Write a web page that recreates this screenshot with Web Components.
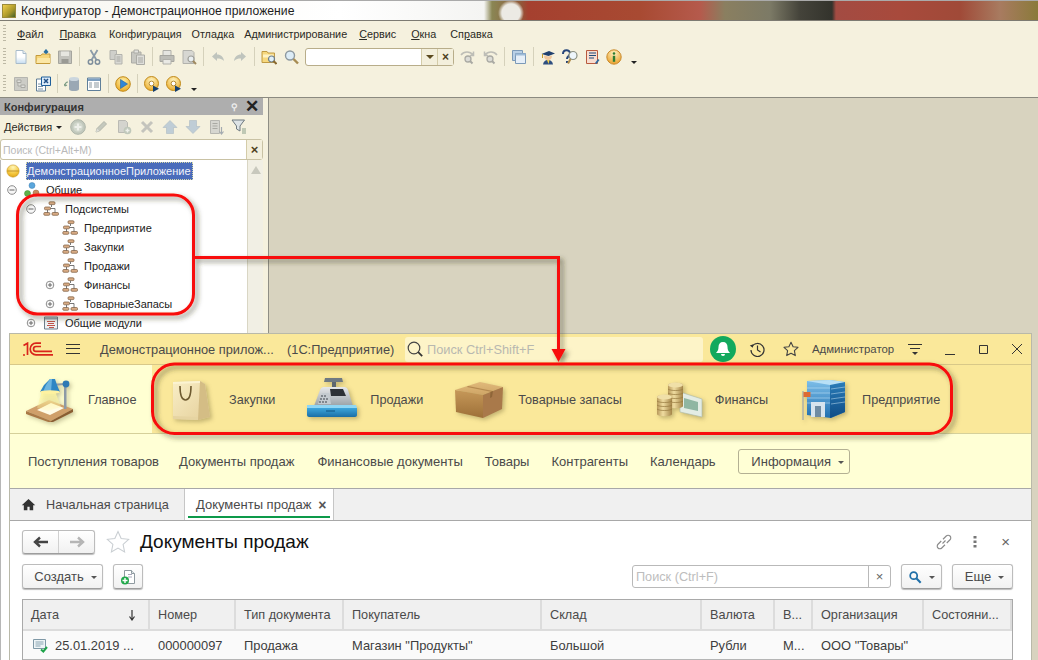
<!DOCTYPE html>
<html lang="ru">
<head>
<meta charset="utf-8">
<title>Конфигуратор</title>
<style>
  html, body { margin: 0; padding: 0; background: #fff; }
  body { position: relative; width: 1038px; height: 660px; overflow: hidden; font-family: "Liberation Sans", Arial, sans-serif; }
</style>
</head>
<body>
<cfg-designer></cfg-designer>
<ent-window></ent-window>
<red-callout></red-callout>

<script>
// Icon library, all drawn by hand on a 16x16 box
const ICONS = {
  doc: `<defs><linearGradient id="g" x2="0" y2="1"><stop offset=".5" stop-color="#fff"/><stop offset="1" stop-color="#c5dcf0"/></linearGradient></defs><path d="M3 1.5h7l3 3v10H3z" fill="url(#g)" stroke="#a9bccb"/><path d="M10 1.5v3h3" fill="#e8eef3" stroke="#a9bccb"/>`,
  open: `<path d="M1 6.5h5l1-1.5h8v9.500H1z" fill="#f7d67a" stroke="#c49a3a"/><path d="M1.500 14l1-5h12.500v5z" fill="#fbe7a6"/><path d="M11 5V1.500M9 3.500l2-2.500 2 2.500" fill="none" stroke="#2a6f9f" stroke-width="1.4"/>`,
  save: `<path d="M1.500 2h13v12.500h-13z" fill="#c2c2bc" stroke="#a5a59e"/><path d="M4 2.500h8v4.500H4z" fill="#e6e6e0"/><path d="M4.500 10h7v4h-7z" fill="#9a9a94"/>`,
  cut: `<path d="M4.500 1l6 10M11.500 1l-6 10" stroke="#8a9aa8" stroke-width="1.8" fill="none"/><circle cx="4.500" cy="13" r="2.200" fill="none" stroke="#7e8e9c" stroke-width="1.5"/><circle cx="11.500" cy="13" r="2.200" fill="none" stroke="#7e8e9c" stroke-width="1.5"/>`,
  copy: `<path d="M2 1.500h6.500v9H2z" fill="#cfcfca" stroke="#b3b3ad"/><path d="M7 5.500h7v9.500H7z" fill="#d9d9d4" stroke="#b3b3ad"/><path d="M8.500 8h4M8.500 10h4M8.500 12h4" stroke="#a5a5a0"/>`,
  paste: `<path d="M1.500 3h9.500v11H1.500z" fill="#c7c7c1" stroke="#acaca6"/><path d="M4 1h4.500v3H4z" fill="#e3e3df" stroke="#acaca6"/><path d="M6.500 6h8v9.500h-8z" fill="#dededa" stroke="#acaca6"/><path d="M8 9h5M8 11h5M8 13h5" stroke="#a8a8a3"/>`,
  print: `<path d="M4 1.500h8v5H4z" fill="#e5e5e0" stroke="#b0b0aa"/><path d="M1 6.500h14v6H1z" fill="#bdbdb7" stroke="#a6a6a0"/><path d="M4 10.500h8v4.500H4z" fill="#e9e9e4" stroke="#b0b0aa"/>`,
  preview: `<path d="M2 1.500h9l2 2v11H2z" fill="#d7d7d2" stroke="#b2b2ac"/><circle cx="10" cy="10" r="3" fill="#e9eef0" stroke="#9f9f99" stroke-width="1.2"/><path d="M12 12l3 3" stroke="#a08a60" stroke-width="2"/>`,
  undo: `<path d="M7 3L2 7.500 7 12V9.500c3 0 5 .5 7 2.500-.5-4-3-6.500-7-6.500z" fill="#bfc4bd"/>`,
  redo: `<path d="M9 3l5 4.500L9 12V9.500c-3 0-5 .5-7 2.500.5-4 3-6.500 7-6.500z" fill="#bfc4bd"/>`,
  folderfind: `<path d="M1 2.500h5l1 1.500h6.500v9.500H1z" fill="#f6d87e" stroke="#bf9a45"/><path d="M2 5.500h10.500v3H2z" fill="#fff3c4"/><circle cx="10.500" cy="10" r="3" fill="#dff0fa" stroke="#6f7f8a" stroke-width="1.2"/><path d="M12.500 12l3 3" stroke="#8a6a30" stroke-width="2"/>`,
  glass: `<circle cx="7" cy="6.500" r="4.500" fill="#dcecf6" stroke="#8d99a0" stroke-width="1.4"/><path d="M10.500 10l4.500 4.500" stroke="#a68b52" stroke-width="2.4"/>`,
  findnext: `<circle cx="8" cy="10" r="3" fill="#dcdcd7" stroke="#a9a9a3" stroke-width="1.3"/><path d="M10 12l2.500 2.500" stroke="#a9a9a3" stroke-width="2"/><path d="M1 6c3-4 9-4 12 0M13.500 2.500V6.500H10" fill="none" stroke="#bdbdb6" stroke-width="1.5"/>`,
  findprev: `<circle cx="8" cy="10" r="3" fill="#dcdcd7" stroke="#a9a9a3" stroke-width="1.3"/><path d="M10 12l2.500 2.500" stroke="#a9a9a3" stroke-width="2"/><path d="M15 6C12 2 6 2 3 6M2.500 2.500V6.500H6" fill="none" stroke="#bdbdb6" stroke-width="1.5"/>`,
  windows: `<path d="M1.500 1.500h10v10h-10z" fill="#b9d0e6" stroke="#7c9ab8"/><path d="M4.500 4.500h10v10h-10z" fill="#e6eff8" stroke="#7c9ab8"/><path d="M4.500 4.500h10v2h-10z" fill="#9dbbd8"/>`,
  student: `<path d="M1.500 5L9 2l6 2.500L8.500 7z" fill="#20406e"/><path d="M4 6.500c0 3 1.500 4.500 4 4.500s4-1.500 4-4.500l-3.500 1z" fill="#f2c79c"/><path d="M3 15.500c.5-3 2-4.500 5-4.500s4.500 1.500 5 4.500z" fill="#2e4f80"/><path d="M7 11h2.500l-1 4z" fill="#f4d04a"/><path d="M2.500 5v4" stroke="#c49a2a"/>`,
  helpfind: `<path d="M1 5c0-5 7-5 7-.5C8 7 5 7 5 10" fill="none" stroke="#26467a" stroke-width="2"/><path d="M4 12h2v2H4z" fill="#26467a"/><circle cx="11" cy="6.500" r="4" fill="#eef6fb" stroke="#8a8f80" stroke-width="1.2"/><path d="M8.500 10l-2.500 4.500" stroke="#b08c4a" stroke-width="2"/>`,
  note: `<path d="M2.500 1.500h11v13h-11z" fill="#f8ddd0" stroke="#b85a3e"/><path d="M5 4h7M5 6.500h7M5 9h5" stroke="#1f4b7a" stroke-width="1.2"/><path d="M11 14l3-4 1.500 1-3 4z" fill="#2e6aa0"/>`,
  info: `<defs><radialGradient id="b" cx=".5" cy=".25" r=".8"><stop offset="0" stop-color="#fff2c2"/><stop offset="1" stop-color="#e89a20"/></radialGradient></defs><circle cx="8" cy="8" r="7.2" fill="url(#b)" stroke="#c98a2c"/><circle cx="8" cy="4.500" r="1.3" fill="#2e7d32"/><path d="M6.800 6.800h2.400v6H6.800z" fill="#2e7d32"/>`,
  tree: `<path d="M1.500 1.500h13v13h-13z" fill="#ccccc6" stroke="#b5b5af"/><path d="M4 4h4v2.500H4zM8 9h4v2.500H8zM5 6.500V10h3" fill="#e0e0dc" stroke="#a9a9a3"/>`,
  docx: `<path d="M1.500 3h9v12h-9z" fill="#fff" stroke="#5f7d96"/><path d="M6.500 1h9v8.500h-9z" fill="#dcebf8" stroke="#1f5f9b"/><path d="M9 3l4 4M13 3L9 7" stroke="#1f4f87" stroke-width="1.5"/><path d="M3 8h3M3 10.500h5M3 13h5" stroke="#7d95a8"/>`,
  db: `<path d="M5 3v10c0 1.500 2 2 5 2s5-.5 5-2V3z" fill="#9aa8b4"/><ellipse cx="10" cy="3" rx="5" ry="2" fill="#cbd6de"/><path d="M1 10c0-3 1.500-4 3-4M1 10l-1-2M1 10l2-1" fill="none" stroke="#7d9c85" stroke-width="1.2"/>`,
  table: `<path d="M1.500 2h13v12.500h-13z" fill="#fff" stroke="#5f7f9a"/><path d="M2 2.500h12v2.500H2z" fill="#7d9fc0"/><path d="M3 7h3M3 9h3M3 11h3M8 7h5M8 9h5M8 11h5" stroke="#8a97a0"/>`,
  play: `<defs><radialGradient id="b" cx=".5" cy=".3" r=".8"><stop offset="0" stop-color="#fff0a8"/><stop offset="1" stop-color="#e8a010"/></radialGradient></defs><circle cx="8" cy="8" r="7.3" fill="url(#b)" stroke="#c08a1c"/><path d="M5.500 3.500L12.500 8l-7 4.500z" fill="#2f86d6" stroke="#1e5f9f" stroke-width=".6"/>`,
  debug: `<defs><radialGradient id="b" cx=".5" cy=".3" r=".8"><stop offset="0" stop-color="#fff6c4"/><stop offset="1" stop-color="#e8a010"/></radialGradient></defs><circle cx="7.500" cy="7.500" r="7" fill="url(#b)" stroke="#c08a1c"/><circle cx="7.500" cy="7.500" r="2.4" fill="#fff" stroke="#b88a2c"/><path d="M9 9.500l6 3.200-6 3.300z" fill="#16406f"/>`,
  add: `<circle cx="8" cy="8" r="7.3" fill="#c2c9bd" stroke="#adb4a8"/><circle cx="8" cy="8" r="4.8" fill="#d2d8cd"/><path d="M8 4.500v7M4.500 8h7" stroke="#eef0ea" stroke-width="2.2"/>`,
  edit: `<path d="M3 13l1-3.500L11 2.500l2.500 2.500-7 7z" fill="#c4c8bd" stroke="#b2b6aa"/><path d="M3 13l1-3.500 2.500 2.500z" fill="#dedfd9"/>`,
  copyadd: `<path d="M2.500 1.500h7l2 2v10h-9z" fill="#d4d4ce" stroke="#babab4"/><circle cx="11.500" cy="11.500" r="3.8" fill="#c0c8bb"/><path d="M11.500 9.500v4M9.500 11.500h4" stroke="#eef0ea" stroke-width="1.4"/>`,
  del: `<path d="M3 3l10 10M13 3L3 13" stroke="#c4c4bd" stroke-width="3"/>`,
  up: `<path d="M8 1.500L15 8.500h-3.500v6h-7v-6H1z" fill="#bfcdd6" stroke="#acbac2" stroke-width=".6"/>`,
  down: `<path d="M8 14.500L1 7.500h3.500v-6h7v6H15z" fill="#bfcdd6" stroke="#acbac2" stroke-width=".6"/>`,
  sort: `<path d="M2.500 1.500h9v13h-9z" fill="#d6d6d0" stroke="#b6b6b0"/><path d="M4.500 4.500h5M4.500 7h5M4.500 9.500h5" stroke="#a9a9a3"/><path d="M13.500 8v6M11.500 12.500l2 2.500 2-2.500" fill="none" stroke="#a3aab0" stroke-width="1.2"/>`,
  filter: `<path d="M1 1h12.500L9 7v5L5.500 10V7z" fill="#dde3e6" stroke="#6f7a80"/><path d="M11 10h4M11 12h4M11 14h4" stroke="#8aa08a" stroke-width="1.2"/>`,
  ball: `<defs><radialGradient id="b" cx=".5" cy=".2" r=".9"><stop offset="0" stop-color="#fff6b8"/><stop offset=".6" stop-color="#f4c53a"/><stop offset="1" stop-color="#d89a12"/></radialGradient></defs><circle cx="8" cy="8" r="7" fill="url(#b)" stroke="#c9971f" stroke-width=".7"/><path d="M1.500 8h13" stroke="#b98a20"/>`,
  common: `<circle cx="8" cy="3.500" r="3" fill="#5aa6dc" stroke="#3f7fb0" stroke-width=".5"/><circle cx="3.500" cy="11.500" r="3" fill="#5fb24a" stroke="#3f8a30" stroke-width=".5"/><circle cx="12" cy="11" r="3" fill="#c98b5e" stroke="#9a643c" stroke-width=".5"/>`,
  subsys: `<g fill="#d8ab84" stroke="#7a5a3e" stroke-width=".7"><rect x="6" y=".8" width="6" height="2.800" rx="1"/><rect x="1.500" y="6" width="6" height="2.800" rx="1"/><rect x=".8" y="11.500" width="6" height="2.800" rx="1"/><rect x="9" y="11.500" width="6.500" height="2.800" rx="1"/></g><path d="M8.500 3.800V6M4.500 9v2.500M12 9.500v2M7.500 7.500h4.500v2" fill="none" stroke="#555" stroke-width=".8"/>`,
  module: `<path d="M1.500 2h13v12h-13z" fill="#eef2f4" stroke="#6f7f8c"/><path d="M2 2.500h12v2H2z" fill="#9aa9b5"/><path d="M4 6.500h8M5 8.500h6M4 10.500h8M6 12.500h5" stroke="#c0544a"/>`,
  minus: `<circle cx="8" cy="8" r="4.3" fill="#f7f7f7" stroke="#8c8c8c"/><path d="M5.500 8h5" stroke="#666"/>`,
  plus: `<circle cx="8" cy="8" r="3.8" fill="#fff" stroke="#8c8c8c"/><path d="M5.800 8h4.400M8 5.800v4.400" stroke="#666"/>`,
  hist: `<path d="M3 5.500A6.500 6.500 0 1 1 2 9" fill="none" stroke="#333" stroke-width="1.2"/><path d="M.8 4.500l3 2.200.6-3.500z" fill="#333"/><path d="M8.500 4.500V9l3 2" fill="none" stroke="#333" stroke-width="1.2"/>`,
  star: `<path d="M8 1.200l2.100 4.500 4.900.6-3.600 3.400.9 4.900L8 12.200l-4.300 2.400.9-4.900L1 6.300l4.900-.6z" fill="none" stroke="#444" stroke-width="1.1" stroke-linejoin="round"/>`,
  starpale: `<path d="M8 1l2.100 4.700 5 .5-3.700 3.400 1 5L8 12.100l-4.400 2.500 1-5L.9 6.200l5-.5z" fill="#fff" stroke="#c9ced2" stroke-width=".7"/>`,
  home: `<path d="M8 2L.8 8.800h2.200V14h3.800v-3.500h2.400V14H13V8.800h2.200z" fill="#333"/>`,
  link: `<path d="M6.800 9.200l2.400-2.400M5.800 7.200l-2.600 2.600a2.100 2.100 0 0 0 3 3l2.600-2.600M7.200 5.800l2.600-2.600a2.100 2.100 0 0 1 3 3l-2.600 2.600" fill="none" stroke="#8a8a8a" stroke-width=".9"/>`,
  search: `<circle cx="6.500" cy="6.500" r="4" fill="none" stroke="#1f6fa8" stroke-width="2"/><path d="M9.500 9.500l5 5" stroke="#1f6fa8" stroke-width="2.4"/>`,
  mglass: `<circle cx="7" cy="7" r="5.8" fill="none" stroke="#444" stroke-width="1.2"/><path d="M11.200 11.200l4 4" stroke="#333" stroke-width="1.8"/>`,
  docadd: `<path d="M4.500 1.500h7l3 3v10h-10z" fill="#fff" stroke="#8f9aa0"/><path d="M11.500 1.500v3h3" fill="#dfe5e8" stroke="#8f9aa0"/><path d="M8 5.500h4M8 8h4" stroke="#aab"/><circle cx="5" cy="11.500" r="4" fill="#21a84a"/><path d="M5 9v5M2.500 11.500h5" stroke="#fff" stroke-width="1.4"/>`,
  rowdoc: `<path d="M1.500 2.500h12v9h-12z" fill="#eef4f6" stroke="#7f98a6"/><path d="M3.500 5h8M3.500 7h8M3.500 9h5" stroke="#8aa5b3"/><path d="M9 12.500l2.300 2 3.700-4.500" fill="none" stroke="#1fa34a" stroke-width="2"/>`
};

// Big pictures of the section panel
const PICTURES = {
  lamp: `<svg viewBox="0 0 50 44" width="50" height="44"><defs><linearGradient id="l" x2="0" y2="1"><stop offset="0" stop-color="#fff6a0" stop-opacity=".95"/><stop offset="1" stop-color="#fff6a0" stop-opacity=".2"/></linearGradient></defs>
    <path d="M1 33L24 22l24 9-22 12z" fill="#cf9f6a"/><path d="M1 33l25 10v2L1 36z" fill="#a97846"/><path d="M26 43l22-12v3L26 45z" fill="#8a5d32"/>
    <path d="M12 32L26 25l13 5-14 7z" fill="#fffbe6"/><path d="M17 13h13l6 16-13 4-11-3z" fill="url(#l)"/>
    <path d="M39 7h2.500v24H39z" fill="#8d9aa6"/><path d="M26 6l14-1v2l-14 1z" fill="#8d9aa6"/>
    <circle cx="41" cy="6" r="3.400" fill="#2d79b4"/><path d="M25 1h5l2 6 3 7H15l4-7z" fill="#2f86c4"/><path d="M25 1h2l-1 13h-8l3-7z" fill="#6cb4e0"/><ellipse cx="25" cy="14" rx="10" ry="1.800" fill="#fff2a0"/></svg>`,
  bag: `<svg viewBox="0 0 42 42" width="42" height="42"><defs><linearGradient id="b" x1="0" y1="0" x2="1" y2="1"><stop offset="0" stop-color="#f9eec6"/><stop offset="1" stop-color="#e4cf9a"/></linearGradient></defs>
    <path d="M1 3l27-1 5 3 5 33-12 3-25-1z" fill="url(#b)"/><path d="M28 2l5 3 5 33-12 3z" fill="#d4bd85"/><path d="M1 37l25 1v3l-25-1z" fill="#e6d4a2"/>
    <path d="M8 7c0 10 2 14 5.500 14S19 17 19 7" fill="none" stroke="#6e5a30" stroke-width="1.6"/><path d="M1 3l27-1v2L1 5z" fill="#fbf3d2"/></svg>`,
  till: `<svg viewBox="0 0 52 44" width="52" height="44"><defs><linearGradient id="b" x2="0" y2="1"><stop offset="0" stop-color="#3da6dc"/><stop offset="1" stop-color="#1a6ea6"/></linearGradient><linearGradient id="s" x2="0" y2="1"><stop offset="0" stop-color="#e6e8ea"/><stop offset="1" stop-color="#9aa2a8"/></linearGradient></defs>
    <path d="M26 3h4v7h-4z" fill="#5d6770"/><path d="M19 0h17l1 4H18z" fill="#6f7a82"/>
    <path d="M8 28L14 12q1-3 4-3h20q3 0 4 3l5 16z" fill="url(#s)"/><path d="M24 11h13l3 7H25z" fill="#2d3136"/><path d="M12 26l4-11h7l2 11z" fill="#c4cbd0"/><path d="M15 18h6M14 21h8M13 24h9" stroke="#6a7278" stroke-width="1.3" stroke-dasharray="2 1"/>
    <path d="M1 27h49l1 3H1z" fill="#8fd6f4"/><path d="M1 30h50v7c0 1-1 2-2 2H3c-1 0-2-1-2-2z" fill="url(#b)"/><path d="M20 33h9" stroke="#0f5080"/></svg>`,
  box: `<svg viewBox="0 0 50 38" width="50" height="38"><defs><linearGradient id="t" x2="0" y2="1"><stop offset="0" stop-color="#e0b97a"/><stop offset="1" stop-color="#cfa566"/></linearGradient><linearGradient id="f" x2="0" y2="1"><stop offset="0" stop-color="#c69859"/><stop offset="1" stop-color="#9d7038"/></linearGradient></defs>
    <path d="M1 9L26 1l23 5-20 8z" fill="url(#t)"/><path d="M1 9l28 5v23L2 31z" fill="url(#f)"/><path d="M29 14l20-8-1 22-19 9z" fill="#a9794a"/><path d="M14 5l25 5-1 1-25-5z" fill="#b58a50"/><path d="M39 10l-1 6-2 1 .5-6z" fill="#8e6538"/></svg>`,
  coins: `<svg viewBox="0 0 48 36" width="48" height="36"><defs><linearGradient id="c" x2="1" y2="0"><stop offset="0" stop-color="#b8995a"/><stop offset=".4" stop-color="#efdca0"/><stop offset="1" stop-color="#a48549"/></linearGradient></defs>
    <path d="M24 10l22 7v18l-22-5z" fill="#e3ece4" stroke="#a9b8a9" stroke-width=".6"/><path d="M28 16l14 4v9l-14-3z" fill="#8fb6a2"/>
    <path d="M12 3c0-3 15-3 15 0v21c0 3-15 3-15 0z" fill="url(#c)"/><ellipse cx="19.500" cy="3" rx="7.500" ry="2.500" fill="#f0e0a8"/><path d="M12 7c2 2 13 2 15 0M12 11c2 2 13 2 15 0M12 15c2 2 13 2 15 0M12 19c2 2 13 2 15 0" fill="none" stroke="#94773c" stroke-width=".7"/>
    <path d="M1 15c0-3 15-3 15 0v17c0 3-15 3-15 0z" fill="url(#c)"/><ellipse cx="8.500" cy="15" rx="7.500" ry="2.500" fill="#f0e0a8"/><path d="M1 19c2 2 13 2 15 0M1 23c2 2 13 2 15 0M1 27c2 2 13 2 15 0" fill="none" stroke="#94773c" stroke-width=".7"/></svg>`,
  office: `<svg viewBox="0 0 44 42" width="44" height="42"><defs><linearGradient id="a" x2="0" y2="1"><stop offset="0" stop-color="#7fc0ea"/><stop offset="1" stop-color="#1f6fb0"/></linearGradient><linearGradient id="b" x2="0" y2="1"><stop offset="0" stop-color="#2a7cb8"/><stop offset="1" stop-color="#0f4c86"/></linearGradient></defs>
    <path d="M5 2L28 1l15 2v30L29 39 5 36z" fill="url(#a)"/><path d="M28 4l15-1v30L28 39z" fill="url(#b)"/><path d="M5 2L28 1l15 2-15 3z" fill="#b8e0f6"/>
    <path d="M5 9h23M5 14h23M5 19h23M5 24h23M29 10l14-2M29 15l14-2M29 20l14-2M29 25l14-2" stroke="#d2ecfb" stroke-width=".8" opacity=".6"/>
    <path d="M9 23h14v15H9z" fill="#d7e4ee"/><path d="M13 27h6v11h-6z" fill="#6f8ca3"/><path d="M1 12v29" stroke="#9ca7ad" stroke-width="1.2"/><path d="M1.500 13h7v5h-7z" fill="#dd6a34"/></svg>`
};

class CfgIcon extends HTMLElement {
  connectedCallback() {
    const size = this.getAttribute( 'size' ) || 16;
    this.attachShadow( {mode: 'open'} ).innerHTML = `
    <style>:host { display: block; flex: none; width: ${size}px; height: ${size}px; } svg { display: block; }</style>
    <svg viewBox="0 0 16 16" width="${size}" height="${size}">${ICONS[this.getAttribute( 'name' )]}</svg>`;
  }
}

class CfgTree extends HTMLElement {
  connectedCallback() {
    const level = +this.getAttribute( 'level' );
    const marker = this.getAttribute( 'marker' );
    const root = this.hasAttribute( 'root' );
    this.attachShadow( {mode: 'open'} ).innerHTML = `
    <style>
      :host { display: flex; align-items: center; height: 19px; padding-left: ${level * 19}px; font-size: 11px; color: #222; white-space: nowrap; }
      .m { width: ${root ? 0 : 16}px; height: 16px; margin-left: 3px; flex: none; }
      .i { margin: 0 6px 0 ${root ? 2 : 4}px; }
    </style>
    <div class="m">${marker ? `<cfg-icon name="${marker}"></cfg-icon>` : ''}</div>
    <cfg-icon class="i" name="${this.getAttribute( 'icon' )}" size="${root ? 14 : 16}"></cfg-icon>
    <slot></slot>`;
  }
}

class CfgDesigner extends HTMLElement {
  constructor() {
    super();
    const bar = ( list ) => list.map( ( n ) => n === '|' ? '<i class="sep"></i>' : n === 'v' ? '<b class="more"></b>' : `<cfg-icon name="${n}"></cfg-icon>` ).join( '' );
    const root = this.attachShadow( {mode: 'open'} );
    root.innerHTML = `
    <style>
      :host { position: absolute; left: 0; top: 0; width: 1038px; height: 660px; display: flex; flex-direction: column; background: #f5f1de; font-size: 10.8px; color: #2b2a24; }
      .title { height: 21px; flex: none; box-sizing: border-box; border-top: 1px solid #aaa; border-bottom: 1px solid #7d7b72; display: flex; align-items: center; gap: 5px; padding-left: 2px; font-size: 12.2px; color: #1d1d1d;
        background: radial-gradient( circle 13px at 511px 12px, #eceae4 70%, rgba( 236, 234, 228, 0 ) ),
          linear-gradient( 90deg, #f6f5ef 0, #fff 340px, #f4f4f2 484px, #8a8654 492px, #8f5a3a 520px, #a5402f 528px, #a84a32 640px, #b55a4c 700px, #8a7f60 725px, #7c7a66 770px, #44433a 800px, #33332c 832px, #a34b42 836px, #a84a3c 900px, #a04a38 960px, #a87b60 1000px, #8a7a3a 1038px ); }
      .logo { width: 14px; height: 14px; background: linear-gradient( 135deg, #f1cf4a, #a9972a 60%, #43602a ); border: 1px solid #9a8a3a; box-sizing: border-box; }
      .menu { height: 22px; flex: none; box-sizing: border-box; padding: 3px 0 0 17px; display: flex; align-items: center; position: relative; }
      .menu span { white-space: nowrap; }
      .menu u { text-underline-offset: 1px; }
      .grip { width: 3px; height: 17px; flex: none; background: repeating-linear-gradient( #bdb9a5 0 1px, transparent 1px 3px ); }
      .menu .grip { position: absolute; left: 0; margin: 0 0 0 3px; }
      .tools { height: 27px; flex: none; display: flex; align-items: center; gap: 6px; }
      .tools .grip { margin: 0 1px 0 3px; }
      .sep { width: 1px; height: 19px; background: #d5d1bb; flex: none; }
      .more { width: 0; height: 0; border: 3px solid transparent; border-top: 3px solid #222; border-bottom: 0; align-self: flex-end; margin: 0 0 6px 3px; }
      .find { width: 149px; height: 18px; box-sizing: border-box; flex: none; border: 1px solid #b8ad8a; border-radius: 3px; background: #fff; display: flex; justify-content: flex-end; }
      .find i { width: 15px; background: #f3efdc; border-left: 1px solid #d4cca9; display: grid; place-items: center; font-style: normal; font-weight: bold; color: #4d4121; font-size: 12px; line-height: 1; }
      .find i.tri::after { content: ''; border: 4px solid transparent; border-top: 4px solid #5b4a1e; border-bottom: 0; }
      .body { flex: 1; display: flex; min-height: 0; border-top: 1px solid #8b8a80; }
      .panel { width: 263px; flex: none; display: flex; flex-direction: column; }
      .phead { height: 17px; flex: none; background: #aeaeae; display: flex; align-items: center; padding: 0 4px; font-weight: bold; font-size: 11px; color: #333; }
      .phead span { flex: 1; }
      .pin { font-size: 9px; color: #eee; margin-right: 7px; }
      .x { font-size: 17px; line-height: 1; color: #222; font-weight: bold; }
      .acts { height: 24px; flex: none; display: flex; align-items: center; gap: 7px; padding-left: 4px; }
      .acts span { width: 59px; flex: none; white-space: nowrap; font-size: 11px; }
      .acts span::after { content: ''; display: inline-block; border: 3px solid transparent; border-top: 3px solid #222; border-bottom: 0; margin: 0 0 2px 4px; }
      .psearch { height: 21px; flex: none; box-sizing: border-box; border: 1px solid #c9c2a4; border-radius: 3px; background: #fff; display: flex; align-items: center; color: #b9b9b9; font-size: 10.5px; padding-left: 2px; }
      .psearch span { flex: 1; }
      .psearch i { width: 15px; height: 19px; background: #f3efdc; border-left: 1px solid #d4cca9; display: grid; place-items: center; font-style: normal; font-weight: bold; color: #4d4121; font-size: 13px; }
      .tree { flex: 1; display: flex; min-height: 0; background: #fff; border-left: 1px solid #b7b7b7; }
      .rows { flex: 1; padding-top: 1px; }
      .scroll { width: 16px; background: #f1efe4; border-left: 1px solid #d9d6c4; display: flex; justify-content: center; padding-top: 6px; box-sizing: border-box; }
      .scroll::before { content: ''; height: 0; border: 5px solid transparent; border-bottom: 8px solid #c8c8bd; border-top: 0; }
      .sel { background: #4a6cbb; color: #f2f4fb; outline: 1px dotted #d6d6a8; outline-offset: -1px; padding: 3px 2px 3px 1px; }
      .gap { width: 5px; flex: none; background: #f5f1de; border-right: 1px solid #8f8e85; }
      .work { flex: 1; background: #d8d3bf; }
    </style>
    <div class="title"><div class="logo"></div>Конфигуратор - Демонстрационное приложение</div>
    <div class="menu"><i class="grip"></i><span style="margin-right:16px"><u>Ф</u>айл</span><span style="margin-right:13px"><u>П</u>равка</span><span style="margin-right:10px">Конфигурация</span><span style="margin-right:10px">Отладка</span><span style="margin-right:12px">Администрирование</span><span style="margin-right:15px"><u>С</u>ервис</span><span style="margin-right:14px"><u>О</u>кна</span><span>Сп<u>р</u>авка</span></div>
    <div class="tools"><i class="grip"></i>${bar( ['doc', 'open', 'save', '|', 'cut', 'copy', 'paste', '|', 'print', 'preview', '|', 'undo', 'redo', '|', 'folderfind', 'glass'] )}<div class="find"><i class="tri"></i><i>×</i></div>${bar( ['findnext', 'findprev', '|', 'windows', '|', 'student', 'helpfind', 'note', 'info', 'v'] )}</div>
    <div class="tools"><i class="grip"></i>${bar( ['tree', 'docx', '|', 'db', 'table', '|', 'play', '|', 'debug', 'debug', 'v'] )}</div>
    <div class="body">
      <div class="panel">
        <div class="phead"><span>Конфигурация</span><b class="pin">⚲</b><b class="x">✕</b></div>
        <div class="acts"><span>Действия</span>${bar( ['add', 'edit', 'copyadd', 'del', 'up', 'down', 'sort', 'filter'] )}</div>
        <div class="psearch"><span>Поиск (Ctrl+Alt+M)</span><i>×</i></div>
        <div class="tree">
          <div class="rows">
            <cfg-tree root level="0" icon="ball"><span class="sel">ДемонстрационноеПриложение</span></cfg-tree>
            <cfg-tree level="0" marker="minus" icon="common">Общие</cfg-tree>
            <cfg-tree level="1" marker="minus" icon="subsys">Подсистемы</cfg-tree>
            <cfg-tree level="2" icon="subsys">Предприятие</cfg-tree>
            <cfg-tree level="2" icon="subsys">Закупки</cfg-tree>
            <cfg-tree level="2" icon="subsys">Продажи</cfg-tree>
            <cfg-tree level="2" marker="plus" icon="subsys">Финансы</cfg-tree>
            <cfg-tree level="2" marker="plus" icon="subsys">ТоварныеЗапасы</cfg-tree>
            <cfg-tree level="1" marker="plus" icon="module">Общие модули</cfg-tree>
          </div>
          <div class="scroll"></div>
        </div>
      </div>
      <div class="gap"></div>
      <div class="work"></div>
    </div>`;
  }
}

class EntSection extends HTMLElement {
  connectedCallback() {
    this.attachShadow( {mode: 'open'} ).innerHTML = `
    <style>
      :host { display: flex; align-items: center; flex: none; box-sizing: border-box; height: 100%; padding-top: 1px; gap: ${this.getAttribute( 'gap' )}px; font-size: 12.7px; color: #4a4a4a; white-space: nowrap; }
      div { display: flex; align-items: center; }
      svg { display: block; filter: drop-shadow( 2px 2px 2px rgba( 70, 60, 20, .3 ) ); }
    </style>
    <div>${PICTURES[this.getAttribute( 'pic' )]}</div><slot></slot>`;
  }
}

class EntButton extends HTMLElement {
  connectedCallback() {
    const arrow = this.hasAttribute( 'arrow' ) ? '<i></i>' : '';
    this.attachShadow( {mode: 'open'} ).innerHTML = `
    <style>
      :host { display: flex; align-items: center; justify-content: center; box-sizing: border-box; height: 25px; flex: none; gap: 7px; border: 1px solid #bcbcbc; border-bottom-color: #9d9d9d; border-radius: 3px; background: linear-gradient( #fff, #f1f1f1 ); box-shadow: 0 1px 1px #bbb; font-size: 13px; color: #4a4a4a; white-space: nowrap; }
      i { border: 3px solid transparent; border-top: 3px solid #555; border-bottom: 0; margin-top: 2px; }
    </style><slot></slot>${arrow}`;
  }
}

class EntTable extends HTMLElement {
  connectedCallback() {
    const heads = ['Дата', 'Номер', 'Тип документа', 'Покупатель', 'Склад', 'Валюта', 'В...', 'Организация', 'Состояни...'];
    const cells = ['25.01.2019 ...', '000000097', 'Продажа', 'Магазин "Продукты"', 'Большой', 'Рубли', 'М...', 'ООО "Товары"', ''];
    this.attachShadow( {mode: 'open'} ).innerHTML = `
    <style>
      :host { display: grid; grid-template-columns: 127px 86px 108px 198px 160px 73px 38px 111px 88px; grid-template-rows: 31px 29px; box-sizing: border-box; width: 991px; border: 1px solid #a9a9a9; border-bottom: 0; font-size: 12.7px; color: #4a4a4a; white-space: nowrap; }
      div { display: flex; align-items: center; padding-left: 8px; box-sizing: border-box; overflow: hidden; }
      .h { background: #f0f0f0; border-right: 2px solid #dcdcdc; border-bottom: 2px solid #dcdcdc; }
      .h:last-of-type { border-right: 0; }
      .c { background: #fafafa; color: #3d3d3d; font-size: 12.9px; border-bottom: 1px solid #b5b5b5; }
      .first { justify-content: space-between; padding-right: 12px; }
      .row { gap: 7px; padding-left: 9px; }
      svg { display: block; }
    </style>
    ${heads.map( ( h, i ) => i === 0 ? `<div class="h first">${h}<svg width="8" height="12"><path d="M4 1v9M1.500 7.500L4 11l2.500-3.500" fill="none" stroke="#333" stroke-width="1.2"/></svg></div>` : `<div class="h">${h}</div>` ).join( '' )}
    ${cells.map( ( c, i ) => i === 0 ? `<div class="c row"><cfg-icon name="rowdoc"></cfg-icon>${c}</div>` : `<div class="c">${c}</div>` ).join( '' )}`;
  }
}

class EntWindow extends HTMLElement {
  constructor() {
    super();
    const root = this.attachShadow( {mode: 'open'} );
    root.innerHTML = `
    <style>
      :host { position: absolute; left: 9px; top: 333px; width: 1023px; height: 327px; box-sizing: border-box; border: 1px solid #b9b9a9; border-bottom: 0; display: flex; flex-direction: column; background: #fff; font-size: 13px; color: #4a4a4a; }
      .head { height: 31px; flex: none; box-sizing: border-box; background: #fae89a; border-bottom: 1px solid #d8c888; display: flex; align-items: center; white-space: nowrap; font-size: 12.8px; }
      .one { width: 30px; height: 14px; margin-left: 13px; flex: none; display: block; }
      .burger { width: 14px; height: 10px; margin: 0 20px 0 13px; flex: none; box-sizing: border-box; border-top: 1px solid #333; border-bottom: 1px solid #333; position: relative; }
      .burger::after { content: ''; position: absolute; left: 0; right: 0; top: 3px; height: 1px; background: #333; }
      .app { width: 174px; margin-right: 13px; flex: none; }
      .inst { width: 105px; flex: none; }
      .lookup { width: 298px; height: 25px; flex: none; margin-left: 13px; border-radius: 3px; background: #fdf4c8; display: flex; align-items: center; gap: 4px; padding-left: 2px; box-sizing: border-box; color: #b8b8b0; }
      .bell { width: 26px; height: 26px; flex: none; margin-left: 7px; border-radius: 50%; background: #12a95d; display: grid; place-items: center; }
      .user { width: 82px; flex: none; font-size: 11.4px; margin: 0 14px 0 13px; }
      .lines { width: 14px; flex: none; display: flex; flex-direction: column; align-items: center; gap: 3px; }
      .lines i { height: 1px; background: #333; }
      .lines i:nth-child(1) { width: 14px; } .lines i:nth-child(2) { width: 10px; }
      .lines i:nth-child(3) { width: 0; height: 0; background: none; border: 3px solid transparent; border-top: 3px solid #333; border-bottom: 0; }
      .ctl { flex: none; display: block; }
      .sections { height: 69px; flex: none; box-sizing: border-box; display: flex; background: #fae89a; border-bottom: 1px solid #d5d09a; }
      .home { width: 142px; flex: none; background: #ffffd2; padding-left: 15px; box-sizing: border-box; display: flex; }
      .rest { flex: 1; display: flex; padding-left: 20px; }
      .funcs { height: 55px; flex: none; box-sizing: border-box; background: #ffffd5; border-bottom: 1px solid #a8a8a8; display: flex; align-items: center; padding-left: 18px; gap: 22px; white-space: nowrap; }
      .funcs ent-button { width: 112px; background: none; box-shadow: none; border: 1px solid #b3b093; padding-left: 8px; }
      .tabs { height: 32px; flex: none; box-sizing: border-box; background: #f0f0f0; border-bottom: 1px solid #a8a8a8; display: flex; white-space: nowrap; font-size: 12.7px; }
      .tab { display: flex; align-items: center; box-sizing: border-box; border-right: 1px solid #c6c6c6; }
      .tab.a { width: 149px; background: #fff; padding-left: 11px; position: relative; gap: 7px; font-size: 13px; }
      .tab.h { width: 175px; padding-left: 11px; gap: 10px; }
      .tab.a::after { content: ''; position: absolute; left: 3px; right: 3px; bottom: 2px; height: 2px; background: #0d9a4a; }
      .tab b { font-size: 14px; color: #555; }
      .form { flex: 1; padding: 8px 18px 0 12px; min-height: 0; display: flex; flex-direction: column; }
      .top { height: 25px; flex: none; display: flex; align-items: center; }
      .nav { width: 73px; height: 24px; gap: 0; }
      .nav span { flex: 1; display: grid; place-items: center; height: 100%; }
      .caption { font-size: 19px; color: #111; margin-left: 10px; flex: 1; white-space: nowrap; }
      .rline { display: flex; height: 25px; flex: none; align-items: center; margin-top: 10px; }
      .field { width: 259px; height: 23px; box-sizing: border-box; border: 1px solid #b9b9b9; border-radius: 3px; display: flex; align-items: center; padding-left: 3px; color: #bdbdbd; font-size: 12.7px; margin-left: auto; background: #fff; }
      .field span { flex: 1; }
      .field i { width: 21px; height: 100%; border-left: 1px solid #b9b9b9; display: grid; place-items: center; font-style: normal; color: #666; font-size: 13px; }
      .tbl { margin-top: 10px; }
    </style>
    <div class="head">
      <svg class="one" viewBox="0 0 30 14"><g fill="none" stroke="#d9241b" stroke-width="1.7"><path d="M.5 3.500L4.500 1.200v11.800M0 13h2"/><path d="M18 1.200h-5a5.700 5.700 0 0 0 0 11.600H30"/><path d="M18 4.500h-5a2.400 2.400 0 0 0 0 4.900H29"/></g></svg>
      <div class="burger"></div>
      <span class="app">Демонстрационное прилож...</span><span class="inst">(1С:Предприятие)</span>
      <div class="lookup"><cfg-icon name="mglass"></cfg-icon>Поиск Ctrl+Shift+F</div>
      <div class="bell"><svg width="16" height="16" viewBox="0 0 16 16"><path d="M8 1c-3 0-4.500 2-4.500 5 0 3-1 4.500-2.500 6h14c-1.500-1.500-2.500-3-2.500-6 0-3-1.500-5-4.500-5z" fill="#fff"/><path d="M6 13h4a2 2 0 0 1-4 0z" fill="#fff"/></svg></div>
      <cfg-icon name="hist" style="margin-left:13px"></cfg-icon>
      <cfg-icon name="star" style="margin-left:18px"></cfg-icon>
      <span class="user">Администратор</span>
      <div class="lines"><i></i><i></i><i></i></div>
      <svg class="ctl" style="margin-left:23px" width="10" height="12"><path d="M0 11.500h10" stroke="#333"/></svg>
      <svg class="ctl" style="margin-left:23px" width="11" height="11"><path d="M1.500 1.500h8v8h-8z" fill="none" stroke="#333"/></svg>
      <svg class="ctl" style="margin-left:22px" width="12" height="12"><path d="M1 1l10 10M11 1L1 11" stroke="#333"/></svg>
    </div>
    <div class="sections">
      <div class="home"><ent-section pic="lamp" gap="13">Главное</ent-section></div>
      <div class="rest">
        <ent-section pic="bag" gap="15">Закупки</ent-section>
        <ent-section pic="till" gap="12" style="margin-left:31px">Продажи</ent-section>
        <ent-section pic="box" gap="14" style="margin-left:31px">Товарные запасы</ent-section>
        <ent-section pic="coins" gap="11" style="margin-left:34px">Финансы</ent-section>
        <ent-section pic="office" gap="16" style="margin-left:34px">Предприятие</ent-section>
      </div>
    </div>
    <div class="funcs">
      <span style="margin-right:-2px">Поступления товаров</span><span style="margin-right:1px">Документы продаж</span><span>Финансовые документы</span><span>Товары</span><span>Контрагенты</span><span>Календарь</span>
      <ent-button arrow>Информация</ent-button>
    </div>
    <div class="tabs">
      <div class="tab h"><cfg-icon name="home" size="15"></cfg-icon>Начальная страница</div>
      <div class="tab a">Документы продаж<b>×</b></div>
    </div>
    <div class="form">
      <div class="top">
        <ent-button class="nav">
          <span><svg width="16" height="12"><path d="M15 6H4M7 1.500L2 6l5 4.500" fill="none" stroke="#444" stroke-width="2.4"/></svg></span>
          <span style="border-left:1px solid #d0d0d0"><svg width="16" height="12"><path d="M1 6h11M9 1.500L14 6l-5 4.500" fill="none" stroke="#b5b5b5" stroke-width="2.4"/></svg></span>
        </ent-button>
        <cfg-icon name="starpale" size="24" style="margin-left:11px"></cfg-icon>
        <span class="caption">Документы продаж</span>
        <cfg-icon name="link" size="20"></cfg-icon>
        <svg width="4" height="12" style="margin:0 24px 0 19px"><path d="M2 0v12" stroke="#777" stroke-width="3" stroke-dasharray="2.5 2"/></svg>
        <span style="color:#666;font-size:15px;margin-right:3px">×</span>
      </div>
      <div class="rline">
        <ent-button arrow style="width:81px;padding-left:6px">Создать</ent-button>
        <ent-button style="width:30px;margin-left:10px"><cfg-icon name="docadd"></cfg-icon></ent-button>
        <div class="field"><span>Поиск (Ctrl+F)</span><i>×</i></div>
        <ent-button arrow style="width:41px;margin-left:10px"><cfg-icon name="search" size="14"></cfg-icon></ent-button>
        <ent-button arrow style="width:61px;margin-left:10px;padding-left:4px">Еще</ent-button>
      </div>
      <ent-table class="tbl"></ent-table>
    </div>`;
  }
}

class RedCallout extends HTMLElement {
  constructor() {
    super();
    this.attachShadow( {mode: 'open'} ).innerHTML = `
    <style>:host { position: absolute; left: 0; top: 0; width: 1038px; height: 660px; pointer-events: none; } svg { display: block; }</style>
    <svg width="1038" height="660" viewBox="0 0 1038 660">
      <defs><filter id="s" x="-5%" y="-5%" width="110%" height="110%"><feDropShadow dx="3" dy="3" stdDeviation="2.5" flood-color="#3a3a20" flood-opacity=".55"/></filter></defs>
      <g filter="url(#s)" fill="none" stroke="#f80d0d" stroke-width="3">
        <rect x="17.500" y="195" width="176" height="119" rx="20"/>
        <path d="M194 257.500H558.500V352"/>
        <rect x="152.500" y="364" width="799" height="69.500" rx="22"/>
        <path d="M551.500 349h14l-7 13z" fill="#f80d0d" stroke="none"/>
      </g>
    </svg>`;
  }
}

// Children first, the windows use them on connect
window.customElements.define( 'cfg-icon', CfgIcon );
window.customElements.define( 'cfg-tree', CfgTree );
window.customElements.define( 'cfg-designer', CfgDesigner );
window.customElements.define( 'ent-section', EntSection );
window.customElements.define( 'ent-button', EntButton );
window.customElements.define( 'ent-table', EntTable );
window.customElements.define( 'ent-window', EntWindow );
window.customElements.define( 'red-callout', RedCallout );
</script>
</body>
</html>
